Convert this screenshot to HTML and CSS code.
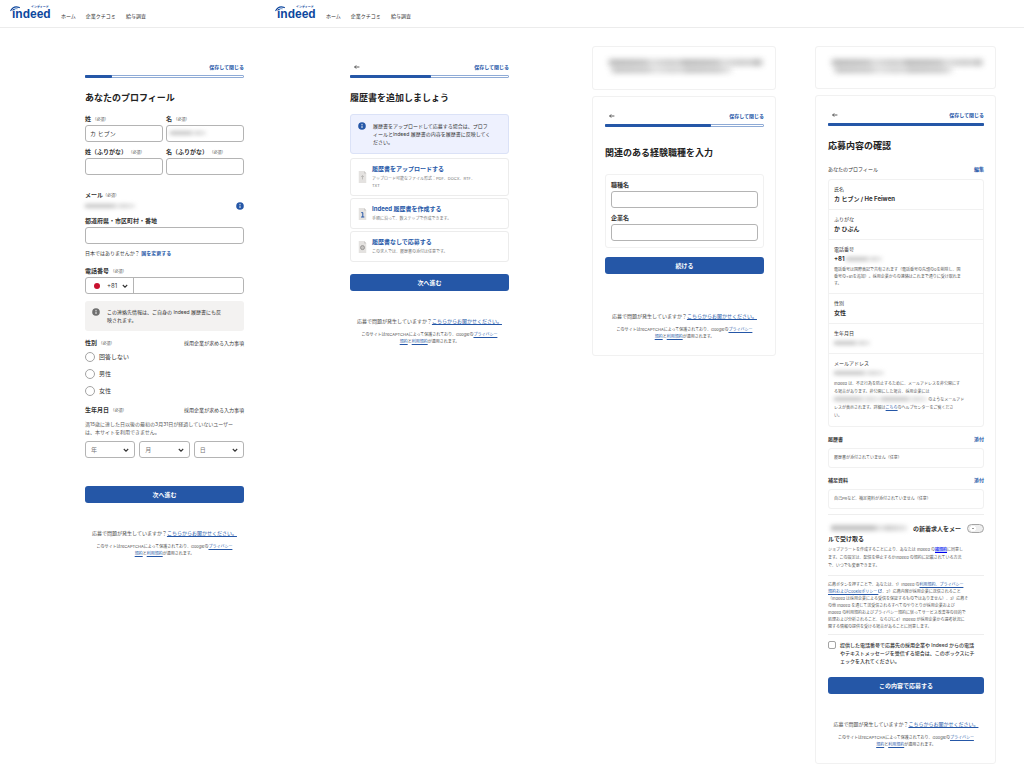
FILE: index.html
```html
<!DOCTYPE html>
<html lang="ja">
<head>
    <meta charset="UTF-8">
    <meta name="viewport" content="width=device-width, initial-scale=1.0">
    <title>Indeed 応募フォーム</title>
    <link rel="stylesheet" href="styles.css">
</head>
<body>
    <!-- Shared icons -->
    <svg class="sprite" aria-hidden="true">
        <symbol id="arc" viewBox="0 0 12 6"><path d="M0.8 4.6C2.6 1.4 6 0.2 9.4 1.6" fill="none" stroke="currentColor" stroke-width="1.1" stroke-linecap="round"/><path d="M2.4 4.8C3.8 3 5.6 2.3 7.6 2.8" fill="none" stroke="currentColor" stroke-width=".6"/></symbol>
        <symbol id="back" viewBox="0 0 8 8"><path d="M1.6 4H6.4M3.2 2.4L1.6 4L3.2 5.6" fill="none" stroke="currentColor" stroke-width=".8"/></symbol>
        <symbol id="chevron" viewBox="0 0 8 8"><path d="M1.8 3L4 5.2L6.2 3" fill="none" stroke="currentColor" stroke-width="1.1"/></symbol>
        <symbol id="info" viewBox="0 0 8 8"><circle cx="4" cy="4" r="3.8" fill="currentColor"/><path d="M4 3.6V6" stroke="#fff" stroke-width=".9"/><circle cx="4" cy="2.3" r=".6" fill="#fff"/></symbol>
        <symbol id="doc" viewBox="0 0 8 12"><path d="M0 0H5.6L8 2.4V12H0Z" fill="#e4e2e0"/><path d="M5.6 0V2.4H8" fill="#c9c7c5"/></symbol>
    </svg>

    <header class="site-header">
        <nav class="site-nav">
            <a class="logo" href="#">indeed<svg class="logo-arc"><use href="#arc"/></svg><small>インディード</small></a>
            <a href="#">ホーム</a>
            <a href="#">企業クチコミ</a>
            <a href="#">給与調査</a>
        </nav>
        <nav class="site-nav">
            <a class="logo" href="#">indeed<svg class="logo-arc"><use href="#arc"/></svg><small>インディード</small></a>
            <a href="#">ホーム</a>
            <a href="#">企業クチコミ</a>
            <a href="#">給与調査</a>
        </nav>
    </header>

    <main class="steps">
        <!-- Step 1: profile -->
        <section class="step">
            <div class="step-nav"><span></span><a href="#">保存して閉じる</a></div>
            <div class="progress"><div style="width: 16%"></div></div>
            <h1>あなたのプロフィール</h1>
            <form>
                <div class="names">
                    <div class="field">
                        <label for="sei">姓 <small>（必須）</small></label>
                        <input id="sei" type="text" value="カ ヒブン">
                    </div>
                    <div class="field">
                        <label for="mei">名 <small>（必須）</small></label>
                        <div class="masked-input"><input id="mei" type="text"><span class="mask"></span></div>
                    </div>
                    <div class="field">
                        <label for="sei-kana">姓（ふりがな） <small>（必須）</small></label>
                        <input id="sei-kana" type="text">
                    </div>
                    <div class="field">
                        <label for="mei-kana">名（ふりがな） <small>（必須）</small></label>
                        <input id="mei-kana" type="text">
                    </div>
                </div>

                <div class="mail">
                    <strong>メール</strong><small>（必須）</small>
                    <div class="mail-row"><span class="mask"></span><svg class="icon blue"><use href="#info"/></svg></div>
                </div>

                <div class="field address">
                    <label for="address">都道府県・市区町村・番地</label>
                    <input id="address" type="text">
                    <p class="country">日本ではありませんか？ <a href="#">国を変更する</a></p>
                </div>

                <div class="field">
                    <label for="tel">電話番号 <small>（必須）</small></label>
                    <div class="tel">
                        <div class="tel-code">
                            <span class="flag"></span>
                            <select aria-label="国番号"><option>+81</option></select>
                            <svg class="chevron"><use href="#chevron"/></svg>
                        </div>
                        <input id="tel" type="tel">
                    </div>
                </div>

                <div class="note grey">
                    <svg class="icon"><use href="#info"/></svg>
                    <p>この連絡先情報は、ご自身の Indeed 履歴書にも反<br>映されます。</p>
                </div>

                <fieldset class="gender">
                    <legend><span>性別 <small>（必須）</small></span><em>採用企業が求める入力事項</em></legend>
                    <label><input type="radio" name="gender">回答しない</label>
                    <label><input type="radio" name="gender">男性</label>
                    <label><input type="radio" name="gender">女性</label>
                </fieldset>

                <fieldset class="birth">
                    <legend><span>生年月日 <small>（必須）</small></span><em>採用企業が求める入力事項</em></legend>
                    <p>満15歳に達した日以後の最初の3月31日が経過していないユーザー<br>は、本サイトを利用できません。</p>
                    <div class="dates">
                        <div class="select"><select aria-label="年"><option>年</option></select><svg class="chevron"><use href="#chevron"/></svg></div>
                        <div class="select"><select aria-label="月"><option>月</option></select><svg class="chevron"><use href="#chevron"/></svg></div>
                        <div class="select"><select aria-label="日"><option>日</option></select><svg class="chevron"><use href="#chevron"/></svg></div>
                    </div>
                </fieldset>
                <button class="primary" type="button">次へ進む</button>
            </form>
            <footer>
                <p class="help">応募で問題が発生していますか？<a href="#">こちらからお聞かせください。</a></p>
                <p class="legal">このサイトはreCAPTCHAによって保護されており、Googleの<a href="#">プライバシー<br>規約</a>と<a href="#">利用規約</a>が適用されます。</p>
            </footer>
        </section>

        <!-- Step 2: resume -->
        <section class="step">
            <div class="step-nav"><a class="back" href="#" aria-label="戻る"><svg><use href="#back"/></svg></a><a href="#">保存して閉じる</a></div>
            <div class="progress"><div style="width: 50%"></div></div>
            <h1>履歴書を追加しましょう</h1>
            <div class="note blue-note">
                <svg class="icon blue"><use href="#info"/></svg>
                <p>履歴書をアップロードして応募する場合は、プロフ<br>ィールとIndeed 履歴書の内容を履歴書に反映してく<br>ださい。</p>
            </div>
            <div class="options">
                <a class="option" href="#">
                    <svg class="doc" viewBox="0 0 8 12"><use href="#doc"/><path d="M4 8.4V4.6M2.6 6L4 4.6L5.4 6" fill="none" stroke="#b4b2b0" stroke-width=".8"/></svg>
                    <span><strong>履歴書をアップロードする</strong><small>アップロード可能なファイル形式：PDF、DOCX、RTF、<br>TXT</small></span>
                </a>
                <a class="option" href="#">
                    <svg class="doc" viewBox="0 0 8 12"><use href="#doc"/><path d="M2.8 4.6H4.3V9M2.6 9H5.8" fill="none" stroke="#2557a7" stroke-width="1"/></svg>
                    <span><strong>Indeed 履歴書を作成する</strong><small>手順に沿って、数ステップで作成できます。</small></span>
                </a>
                <a class="option" href="#">
                    <svg class="doc" viewBox="0 0 8 12"><use href="#doc"/><circle cx="4" cy="6.6" r="2" fill="#c4c2c0" stroke="#949290" stroke-width=".9"/></svg>
                    <span><strong>履歴書なしで応募する</strong><small>この求人では、履歴書の添付は任意です。</small></span>
                </a>
            </div>
            <button class="primary" type="button">次へ進む</button>
            <footer>
                <p class="help">応募で問題が発生していますか？<a href="#">こちらからお聞かせください。</a></p>
                <p class="legal">このサイトはreCAPTCHAによって保護されており、Googleの<a href="#">プライバシー<br>規約</a>と<a href="#">利用規約</a>が適用されます。</p>
            </footer>
        </section>

        <!-- Step 3: experience -->
        <section class="step carded experience">
            <div class="panel job"><span class="mask"></span><span class="mask short"></span></div>
            <div class="panel">
                <div class="step-nav"><a class="back" href="#" aria-label="戻る"><svg><use href="#back"/></svg></a><a href="#">保存して閉じる</a></div>
                <div class="progress"><div style="width: 66%"></div></div>
                <h1>関連のある経験職種を入力</h1>
                <form>
                    <div class="box">
                        <div class="field">
                            <label for="job">職種名</label>
                            <input id="job" type="text">
                        </div>
                        <div class="field">
                            <label for="company">企業名</label>
                            <input id="company" type="text">
                        </div>
                    </div>
                    <button class="primary" type="button">続ける</button>
                </form>
                <footer>
                    <p class="help">応募で問題が発生していますか？<a href="#">こちらからお聞かせください。</a></p>
                    <p class="legal">このサイトはreCAPTCHAによって保護されており、Googleの<a href="#">プライバシー<br>規約</a>と<a href="#">利用規約</a>が適用されます。</p>
                </footer>
            </div>
        </section>

        <!-- Step 4: review -->
        <section class="step carded review">
            <div class="panel job"><span class="mask"></span><span class="mask short"></span></div>
            <div class="panel">
                <div class="step-nav"><a class="back" href="#" aria-label="戻る"><svg><use href="#back"/></svg></a><a href="#">保存して閉じる</a></div>
                <div class="progress"><div style="width: 100%"></div></div>
                <h1>応募内容の確認</h1>

                <div class="section-head first"><h2>あなたのプロフィール</h2><a href="#">編集</a></div>
                <dl class="summary">
                    <div><dt>氏名</dt><dd>カ ヒブン / He Feiwen</dd></div>
                    <div><dt>ふりがな</dt><dd>か ひぶん</dd></div>
                    <div>
                        <dt>電話番号</dt>
                        <dd>+81 <span class="mask"></span></dd>
                        <dd class="detail">電話番号は国際表記で共有されます（電話番号の先頭の0を削除し、国<br>番号の+81を追加）。採用企業からの連絡はこれまで通りに受け取れま<br>す。</dd>
                    </div>
                    <div><dt>性別</dt><dd>女性</dd></div>
                    <div><dt>生年月日</dt><dd><span class="mask"></span></dd></div>
                    <div>
                        <dt>メールアドレス</dt>
                        <dd><span class="mask wide"></span></dd>
                        <dd class="detail loose">Indeed は、不正行為を防止するために、メールアドレスを非公開にす<br>る場合があります。非公開にした場合、採用企業には<br><span class="mask wide"></span> <span class="mask wide"></span> のようなメールアド<br>レスが表示されます。詳細は<a href="#">こちら</a>のヘルプセンターをご覧くださ<br>い。</dd>
                    </div>
                </dl>

                <div class="section-head"><h2 class="bold">履歴書</h2><a href="#">添付</a></div>
                <p class="empty">履歴書が添付されていません（任意）</p>
                <div class="section-head"><h2 class="bold">補足資料</h2><a href="#">添付</a></div>
                <p class="empty">自己PRなど、補足資料が添付されていません（任意）</p>

                <div class="alert">
                    <div class="alert-head">
                        <label for="alert"><span class="mask"></span>の新着求人をメー<br>ルで受け取る</label>
                        <input id="alert" type="checkbox" role="switch">
                    </div>
                    <p>ジョブアラートを作成することにより、あなたは Indeed の<a class="selected" href="#">諸規約</a>に同意し<br>ます。この設定は、配信を停止するかIndeed の規約に記載されている方法<br>で、いつでも変更できます。</p>
                </div>

                <p class="terms">応募ボタンを押すことで、あなたは、1）Indeed の<a href="#">利用規約、プライバシー<br>規約およびCookieポリシー <svg viewBox="0 0 8 8"><path d="M3.4 1.5H1V7H6.5V4.6M4.6 1H7V3.4M7 1L3.6 4.4" fill="none" stroke="currentColor"/></svg></a>、2）応募内容が採用企業に送信されること<br>（Indeed は採用企業による受信を保証するものではありません）、3）応募そ<br>の他 Indeed を通じて送受信されるすべてのやりとりが採用企業および<br>Indeed の利用規約およびプライバシー規約に従ってサービス改善等の目的で<br>処理および分析されること、ならびに4）Indeed が採用企業から選考状況に<br>関する情報の提供を受ける場合があることに同意します。</p>

                <label class="consent"><input type="checkbox"><span>提供した電話番号で応募先の採用企業や Indeed からの電話<br>やテキストメッセージを受信する場合は、このボックスにチ<br>ェックを入れてください。</span></label>
                <button class="primary" type="button">この内容で応募する</button>
                <footer>
                    <p class="help">応募で問題が発生していますか？<a href="#">こちらからお聞かせください。</a></p>
                    <p class="legal">このサイトはreCAPTCHAによって保護されており、Googleの<a href="#">プライバシー<br>規約</a>と<a href="#">利用規約</a>が適用されます。</p>
                </footer>
            </div>
        </section>
    </main>
</body>
</html>
```
FILE: styles.css
```css
* {
    box-sizing: border-box;
}
body {
    margin: 0;
    background-color: #fff;
    color: #333;
    font-family: Inter, "Noto Sans CJK JP", sans-serif;
    font-size: 5px;
    line-height: 8px;
}
h1, h2, p, dl, dd, fieldset {
    margin: 0;
    padding: 0;
    border: 0;
}
a {
    color: #2557a7;
}
input, select, button {
    font: inherit;
    color: inherit;
    margin: 0;
}
.sprite {
    position: absolute;
    width: 0;
    height: 0;
}

/* Header */
.site-header {
    display: grid;
    grid-template-columns: 265fr 759fr;
    height: 28px;
    border-bottom: 1px solid #ececec;
}
.site-nav {
    display: flex;
    align-items: center;
    gap: 10px;
    padding: 5px 0 0 11px;
}
.site-nav a {
    color: #333;
    text-decoration: none;
    white-space: nowrap;
}
.site-nav .logo {
    position: relative;
    width: 40px;
    padding-left: 1px;
    color: #0d479e;
    font: bold 12px/12px "Liberation Sans", sans-serif;
    margin-top: -5px;
}
.logo-arc {
    position: absolute;
    left: -1px;
    top: -2px;
    width: 12px;
    height: 6px;
}
.logo small {
    position: absolute;
    left: 20px;
    top: -2px;
    color: #0d479e;
    font: bold 3px/3px "Noto Sans CJK JP", sans-serif;
}

/* Columns */
.steps {
    display: grid;
    grid-template-columns: 265fr 265fr 265fr 229fr;
    align-items: start;
}
.step {
    padding: 35px 21px 20px 85px;
    min-width: 0;
}
.carded {
    padding-top: 18px;
}
.experience {
    padding-left: 62px;
    padding-right: 19px;
}
.review {
    padding-left: 20px;
    padding-right: 28px;
}
.panel {
    padding: 15px 11px 15px 12px;
    border: 1px solid #f1f1f1;
    border-radius: 3px;
}
.job {
    height: 44px;
    margin-bottom: 6px;
    padding: 13px 13px 13px 16px;
}
.review .job {
    height: 43px;
}

.step-nav {
    display: flex;
    justify-content: space-between;
    align-items: center;
    font-weight: bold;
}
.step-nav a {
    text-decoration: none;
}
.step-nav .back {
    margin-left: 3px;
    color: #333;
}
.back svg {
    display: block;
    width: 8px;
    height: 8px;
}
.progress {
    height: 3px;
    margin-top: 4px;
    border: 1px solid #8fabd6;
    border-radius: 1px;
    background-color: #fff;
}
.progress div {
    height: 3px;
    margin: -1px;
    border-radius: 1px;
    background-color: #2557a7;
    box-sizing: content-box;
    padding-right: 2px;
}
h1 {
    margin-top: 14px;
    color: #222;
    font-size: 9px;
    line-height: 12px;
    white-space: nowrap;
}
.experience h1 {
    margin-top: 20px;
}

/* Redacted values */
.mask {
    display: inline-block;
    width: 36px;
    height: 4px;
    background: linear-gradient(90deg, #aaa 55%, #ddd 65%, #bbb 75%, #ddd);
    filter: blur(2px);
    opacity: .7;
}
.mask.wide {
    width: 50px;
}
.job .mask {
    display: block;
    width: 100%;
    height: 5px;
    background: repeating-linear-gradient(90deg, #777 0, #888 36px, #bbb 42px, #999 60px, #aaa 72px);
    filter: blur(3px);
}
.job .mask.short {
    width: 78%;
    height: 4px;
    margin: 3px 0 0 3px;
}

/* Forms */
.names {
    display: grid;
    grid-template-columns: 1fr 1fr;
    gap: 6px 3px;
    margin-top: 11px;
}
.field label {
    display: block;
    height: 8px;
    margin-bottom: 2px;
    font-size: 6px;
    font-weight: bold;
    white-space: nowrap;
}
small {
    font-size: 4px;
    font-weight: normal;
    color: #595959;
}
input[type="text"], input[type="tel"] {
    display: block;
    width: 100%;
    height: 17px;
    padding: 0 4px;
    border: 1px solid #b4b4b4;
    border-radius: 3px;
    background-color: #fff;
    font-size: 6px;
}
.masked-input {
    position: relative;
}
.masked-input .mask {
    position: absolute;
    left: 4px;
    top: 6px;
}
.mail {
    margin-top: 16px;
}
.mail strong {
    font-size: 6px;
}
.mail-row {
    display: flex;
    justify-content: space-between;
    align-items: center;
    height: 10px;
    margin-top: 1px;
}
.mail-row .mask {
    width: 50px;
}
.icon {
    flex: none;
    display: block;
    width: 8px;
    height: 8px;
    color: #6f6f6f;
}
.blue {
    color: #2557a7;
}
.address {
    margin: 6px 0 10px;
}
.country {
    margin-top: 5px;
}
.country a {
    font-weight: bold;
    text-decoration: none;
}
.tel {
    display: flex;
    height: 17px;
    border: 1px solid #b4b4b4;
    border-radius: 3px;
}
.tel-code {
    display: flex;
    align-items: center;
    width: 48px;
    padding-left: 8px;
    border-right: 1px solid #b4b4b4;
}
.flag {
    width: 6px;
    height: 6px;
    border-radius: 50%;
    background-color: #c8102e;
}
.tel select {
    width: 14px;
    margin-left: 7px;
    font-size: 6px;
}
.tel input[type="tel"] {
    flex: 1;
    width: 0;
    height: 15px;
    border: 0;
}
select {
    appearance: none;
    padding: 0;
    border: 0;
    background: none;
}
.chevron {
    display: block;
    width: 8px;
    height: 8px;
}
.note {
    display: flex;
    gap: 7px;
    margin-top: 7px;
    padding: 7px;
    border-radius: 3px;
    white-space: nowrap;
}
.grey {
    background-color: #f3f2f1;
}
.blue-note {
    margin-top: 10px;
    border: 1px solid #dbe2f7;
    background-color: #eef1fe;
}
legend {
    display: flex;
    justify-content: space-between;
    width: 100%;
    height: 8px;
    padding: 0;
    font-size: 6px;
    font-weight: bold;
    white-space: nowrap;
}
legend em {
    font-size: 5px;
    font-style: normal;
    font-weight: normal;
}
.gender {
    margin-top: 8px;
}
.gender label {
    display: flex;
    align-items: center;
    gap: 4px;
    height: 10px;
    margin-top: 7px;
    font-size: 6px;
}
.gender legend + label {
    margin-top: 5px;
}
input[type="radio"], input[type="checkbox"] {
    flex: none;
    appearance: none;
    width: 10px;
    height: 10px;
    border: 1px solid #a4a4a4;
    border-radius: 50%;
    background-color: #fff;
}
.birth {
    margin-top: 10px;
}
.birth p {
    margin-top: 6px;
    color: #595959;
    white-space: nowrap;
}
.dates {
    display: grid;
    grid-template-columns: repeat(3, 1fr);
    gap: 4px;
    margin-top: 5px;
}
.select {
    position: relative;
}
.select select {
    display: block;
    width: 100%;
    height: 17px;
    padding: 0 5px;
    border: 1px solid #b4b4b4;
    border-radius: 3px;
    color: #767676;
    font-size: 6px;
}
.select .chevron {
    position: absolute;
    right: 5px;
    top: 5px;
    pointer-events: none;
}
.primary {
    display: block;
    width: 100%;
    height: 17px;
    margin-top: 28px;
    padding: 0;
    border: 0;
    border-radius: 3px;
    background-color: #2557a7;
    color: #fff;
    font-size: 6px;
    font-weight: bold;
    cursor: pointer;
}
footer {
    margin-top: 26px;
    text-align: center;
    white-space: nowrap;
    color: #4b4b4b;
}
.legal {
    margin-top: 6px;
    font-size: 4px;
    line-height: 7px;
}

/* Resume options */
.options {
    display: grid;
    gap: 2px;
    margin-top: 4px;
}
.option {
    display: flex;
    align-items: center;
    gap: 5px;
    padding: 6px 7px;
    border: 1px solid #ececec;
    border-radius: 3px;
    text-decoration: none;
    white-space: nowrap;
}
.option strong {
    display: block;
    margin-bottom: 2px;
    font-size: 6px;
}
.option small {
    display: block;
    line-height: 7px;
    color: #767676;
}
.doc {
    flex: none;
    width: 9px;
    height: 12px;
}
.options + .primary {
    margin-top: 12px;
}

/* Experience */
.box {
    display: grid;
    gap: 6px;
    margin-top: 15px;
    padding: 6px 5px;
    border: 1px solid #f1f1f1;
    border-radius: 3px;
}
.box + .primary {
    margin-top: 9px;
}
.experience footer {
    margin-top: 38px;
}

/* Review */
.section-head {
    display: flex;
    justify-content: space-between;
    margin: 8px 0 5px;
}
.section-head.first {
    margin: 13px 0 6px;
}
.section-head h2 {
    font-size: 5px;
    font-weight: normal;
}
.section-head .bold, .section-head a {
    font-weight: bold;
}
.section-head a {
    text-decoration: none;
}
.summary {
    border: 1px solid #f1f1f1;
    border-radius: 3px;
}
.summary > div {
    padding: 5px 5px 6px;
    border-bottom: 1px solid #f1f1f1;
}
.summary > div:last-child {
    border-bottom: 0;
}
.summary dd {
    height: 8px;
    margin-top: 2px;
    font-size: 6px;
    font-weight: bold;
}
.summary .detail {
    height: auto;
    margin-top: 3px;
    font-size: 4px;
    font-weight: normal;
    line-height: 7px;
    color: #595959;
    white-space: nowrap;
}
.summary .loose {
    line-height: 8px;
}
.detail .mask.wide {
    width: 46px;
}
.empty {
    padding: 5px;
    border: 1px solid #f1f1f1;
    border-radius: 3px;
    font-size: 4px;
    color: #595959;
}
.alert {
    margin: 5px 0;
    padding: 9px 0 5px;
    border-top: 1px solid #eee;
    border-bottom: 1px solid #eee;
    white-space: nowrap;
}
.alert-head {
    display: flex;
    justify-content: space-between;
    align-items: flex-start;
    font-size: 6px;
    font-weight: bold;
    line-height: 10px;
}
.alert-head .mask {
    width: 76px;
    height: 6px;
    margin: 0 6px 0 3px;
}
.alert-head input[type="checkbox"] {
    width: 17px;
    height: 9px;
    border-radius: 5px;
    background: radial-gradient(circle at 5px 50%, #999 0, #999 1px, #fff 1px, #fff 3px, #eee 3px);
}
.alert p {
    margin-top: 2px;
    font-size: 4px;
    color: #595959;
}
.alert .selected {
    background-color: #c3d3fb;
    color: #0000ee;
}
.terms {
    padding-bottom: 4px;
    border-bottom: 1px solid #eee;
    font-size: 4px;
    line-height: 7px;
    color: #595959;
    white-space: nowrap;
}
.terms svg {
    width: 4px;
    height: 4px;
}
.consent {
    display: flex;
    gap: 4px;
    margin-top: 6px;
    font-weight: 500;
    white-space: nowrap;
}
.consent input[type="checkbox"] {
    width: 8px;
    height: 8px;
    border-radius: 2px;
}
.consent + .primary {
    margin-top: 12px;
}
```
